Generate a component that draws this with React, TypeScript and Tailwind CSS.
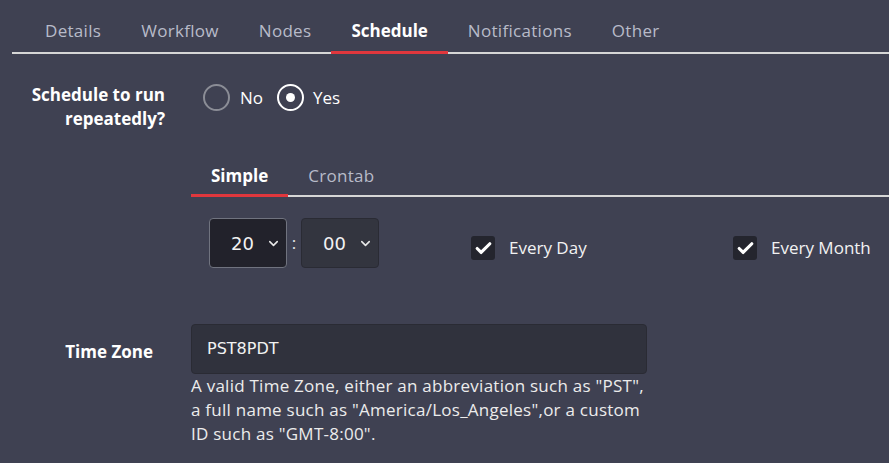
import { Check, ChevronDown } from 'lucide-react'

const tabs = ['Details', 'Workflow', 'Nodes', 'Schedule', 'Notifications', 'Other']

function TimeSelect({ value, focused }: { value: string; focused?: boolean }) {
  return (
    <div
      className={
        'flex h-[50px] w-[78px] items-center justify-between rounded-[4px] border pl-[21px] pr-[5px] ' +
        (focused ? 'border-[#70737f] bg-[#22222b]' : 'border-[#2a2b34] bg-[#33353f]')
      }
    >
      <span className="font-['DejaVu_Sans',sans-serif] text-[18px] text-[#f2f2f2]">{value}</span>
      <ChevronDown size={15} strokeWidth={2.5} className="text-[#e8e8e8]" />
    </div>
  )
}

function CheckItem({ label }: { label: string }) {
  return (
    <div className="mt-[18px] flex items-center gap-[14px]">
      <span className="flex h-6 w-6 items-center justify-center rounded-[3px] bg-[#24252e]">
        <Check size={19} strokeWidth={4} className="text-white" />
      </span>
      <span className="text-[17px] leading-6 text-[#f2f2f2]">{label}</span>
    </div>
  )
}

export default function App() {
  return (
    <div className="h-[463px] w-[889px] overflow-hidden bg-[#3f4152] font-['Open_Sans',sans-serif] text-white">
      {/* top tabs */}
      <ul className="ml-[12px] flex border-b-2 border-[#d6d6d6] pl-[13px]">
        {tabs.map((t) => (
          <li
            key={t}
            className={
              '-mb-[2px] border-b-[3px] px-5 pb-[8px] pt-[19px] text-[17px] leading-6 ' +
              (t === 'Schedule'
                ? 'border-[#e0373d] font-bold text-white'
                : 'border-transparent tracking-[0.3px] text-[#b8bbc9]')
            }
          >
            {t}
          </li>
        ))}
      </ul>

      {/* schedule repeatedly */}
      <div className="mt-[29px] flex items-start">
        <div className="w-[165px] text-right text-[17px] font-bold leading-6">
          Schedule to run
          <br />
          repeatedly?
        </div>
        <div className="ml-[38px] mt-[1px] flex h-[27px] items-center text-[17px]">
          <span className="h-[27px] w-[27px] rounded-full border-2 border-[#8b8d96]" />
          <span className="ml-[10px]">No</span>
          <span className="ml-[14px] flex h-[27px] w-[27px] items-center justify-center rounded-full border-2 border-white">
            <span className="h-[9px] w-[9px] rounded-full bg-white" />
          </span>
          <span className="ml-[9px]">Yes</span>
        </div>
      </div>

      {/* sub tabs */}
      <ul className="ml-[191px] mt-[21px] flex border-b-2 border-[#d6d6d6]">
        {['Simple', 'Crontab'].map((t) => (
          <li
            key={t}
            className={
              '-mb-[2px] border-b-[3px] px-5 pb-[6px] pt-[12px] text-[17px] leading-6 ' +
              (t === 'Simple'
                ? 'border-[#e0373d] font-bold text-white'
                : 'border-transparent tracking-[0.3px] text-[#b8bbc9]')
            }
          >
            {t}
          </li>
        ))}
      </ul>

      <div className="ml-[209px] mt-[21px] grid grid-cols-[262px_262px_auto] items-start">
        <div className="flex items-center">
          <TimeSelect value="20" focused />
          <span className="w-[14px] text-center text-[17px] text-[#e8e8e8]">:</span>
          <TimeSelect value="00" />
        </div>
        <CheckItem label="Every Day" />
        <CheckItem label="Every Month" />
      </div>

      {/* time zone */}
      <div className="mt-[56px] flex items-start">
        <div className="w-[153px] pt-[16px] text-right text-[17px] font-bold leading-6">Time Zone</div>
        <div className="ml-[38px] w-[456px]">
          <div className="flex h-[50px] items-center rounded-[4px] border border-[#2a2b34] bg-[#30323d] px-[15px] font-['DejaVu_Sans',sans-serif] text-[16px] text-[#f2f2f2]">
            PST8PDT
          </div>
          <p className="whitespace-nowrap text-[17px] leading-6 tracking-[0.25px] text-[#ececec]">
            A valid Time Zone, either an abbreviation such as "PST",
            <br />
            a full name such as "America/Los_Angeles",or a custom
            <br />
            ID such as "GMT-8:00".
          </p>
        </div>
      </div>
    </div>
  )
}
